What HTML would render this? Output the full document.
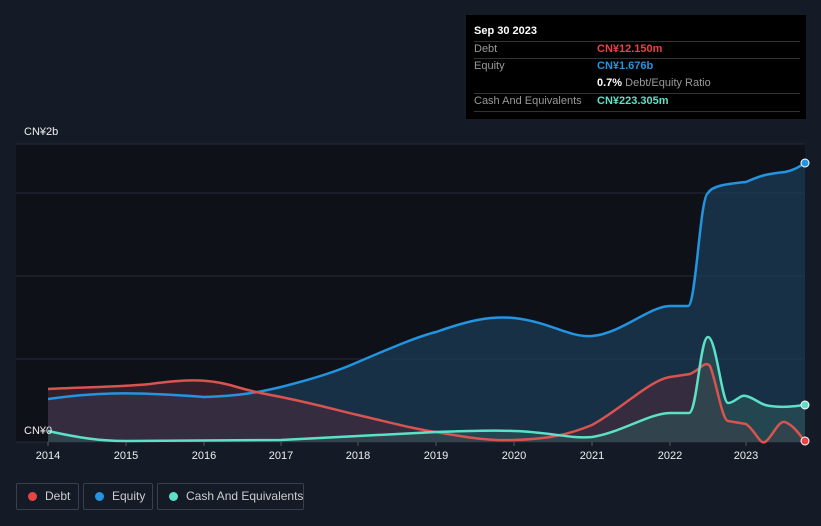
<!DOCTYPE html><html><head><style>
body{margin:0;width:821px;height:526px;background:#151b26;font-family:"Liberation Sans",sans-serif;overflow:hidden;position:relative}
.tt{position:absolute;left:466px;top:15px;width:340px;height:104px;background:#000;color:#fff;font-size:11px}
.tt .r{position:absolute;left:8px;width:326px;border-top:1px solid #333}
.lg{position:absolute;top:483px;height:27px;border:1px solid #3a3f4a;border-radius:2px;color:#ccc;font-size:12px;line-height:25px;box-sizing:border-box;white-space:nowrap}
.lg i{position:absolute;left:11px;top:8px;width:9px;height:9px;border-radius:50%}
.yr{position:absolute;top:450px;color:#eee;font-size:11px;transform:translateX(-50%)}
</style></head><body>
<svg width="821" height="526" style="position:absolute;left:0;top:0">
<rect x="16" y="144" width="789" height="298" fill="#0e1118"/>
<g stroke="#262c37" stroke-width="1"><line x1="16" y1="144" x2="805" y2="144"/><line x1="16" y1="193" x2="805" y2="193"/><line x1="16" y1="276" x2="805" y2="276"/><line x1="16" y1="359" x2="805" y2="359"/><line x1="16" y1="442" x2="805" y2="442"/></g>
<path d="M48,399 C90,393 126,391 204,397 C240,396 260,392 281,387 C320,377 340,370 358,362 C400,344 420,336 436,332 C470,320 490,316 514,318 C550,322 570,338 592,336 C620,334 650,306 670,306 L688,306 C696,306 700,196 708,193 C712,186 725,184 746,182 C760,176 765,174 785,172 C795,170 800,166 805,163 L805,442 L48,442Z" fill="#1b3d5a" opacity=".7"/>
<path d="M48,389 C90,387 120,387 150,384 C180,380 204,378 230,385 C250,391 260,393 281,397 C320,405 340,411 358,415 C400,425 420,430 436,432 C470,438 490,441 514,440 C550,439 570,434 592,425 C620,410 650,380 670,377 L690,374 C700,370 705,360 710,366 C716,380 722,420 728,421 L746,424 C755,430 760,445 765,442 C772,438 778,420 785,422 C795,426 800,436 805,441 L805,442 L48,442Z" fill="#4a2a3a" opacity=".6"/>
<path d="M48,431 C80,438 100,441 126,441 L281,440 C320,438 340,437 358,436 L436,432 C470,431 490,430 514,431 C550,432 570,439 592,437 C620,433 650,413 670,413 L689,413 C697,413 700,337 708,337 C716,337 722,403 728,403 C735,403 740,394 746,396 C755,398 760,405 770,406 C785,408 795,406 805,405 L805,442 L48,442Z" fill="#2e5a5a" opacity=".55"/>
<g fill="none" stroke-width="2.5" stroke-linejoin="round">
<path d="M48,399 C90,393 126,391 204,397 C240,396 260,392 281,387 C320,377 340,370 358,362 C400,344 420,336 436,332 C470,320 490,316 514,318 C550,322 570,338 592,336 C620,334 650,306 670,306 L688,306 C696,306 700,196 708,193 C712,186 725,184 746,182 C760,176 765,174 785,172 C795,170 800,166 805,163" stroke="#2394e0"/>
<path d="M48,389 C90,387 120,387 150,384 C180,380 204,378 230,385 C250,391 260,393 281,397 C320,405 340,411 358,415 C400,425 420,430 436,432 C470,438 490,441 514,440 C550,439 570,434 592,425 C620,410 650,380 670,377 L690,374 C700,370 705,360 710,366 C716,380 722,420 728,421 L746,424 C755,430 760,445 765,442 C772,438 778,420 785,422 C795,426 800,436 805,441" stroke="#d9534f"/>
<path d="M48,431 C80,438 100,441 126,441 L281,440 C320,438 340,437 358,436 L436,432 C470,431 490,430 514,431 C550,432 570,439 592,437 C620,433 650,413 670,413 L689,413 C697,413 700,337 708,337 C716,337 722,403 728,403 C735,403 740,394 746,396 C755,398 760,405 770,406 C785,408 795,406 805,405" stroke="#5ee0c8"/>
</g>
<circle cx="805" cy="163" r="4" fill="#2394e0" stroke="#fff"/><circle cx="805" cy="405" r="4" fill="#5ee0c8" stroke="#fff"/><circle cx="805" cy="441" r="4" fill="#e84444" stroke="#fff"/>
<g stroke="#555"><line x1="48" y1="442" x2="48" y2="446"/><line x1="126" y1="442" x2="126" y2="446"/><line x1="204" y1="442" x2="204" y2="446"/><line x1="281" y1="442" x2="281" y2="446"/><line x1="358" y1="442" x2="358" y2="446"/><line x1="436" y1="442" x2="436" y2="446"/><line x1="514" y1="442" x2="514" y2="446"/><line x1="592" y1="442" x2="592" y2="446"/><line x1="670" y1="442" x2="670" y2="446"/><line x1="746" y1="442" x2="746" y2="446"/></g>
</svg>
<div style="position:absolute;left:24px;top:126px;color:#eee;font-size:11px">CN¥2b</div>
<div style="position:absolute;left:24px;top:425px;color:#eee;font-size:11px">CN¥0</div>
<div class="yr" style="left:48px">2014</div><div class="yr" style="left:126px">2015</div><div class="yr" style="left:204px">2016</div><div class="yr" style="left:281px">2017</div><div class="yr" style="left:358px">2018</div><div class="yr" style="left:436px">2019</div><div class="yr" style="left:514px">2020</div><div class="yr" style="left:592px">2021</div><div class="yr" style="left:670px">2022</div><div class="yr" style="left:746px">2023</div>
<div class="tt">
<div style="position:absolute;left:8px;top:10px;font-weight:bold">Sep 30 2023</div>
<div class="r" style="top:26px"></div>
<div style="position:absolute;left:8px;top:28px;color:#999">Debt</div><div style="position:absolute;left:131px;top:28px;color:#e84444;font-weight:bold">CN¥12.150m</div>
<div class="r" style="top:43px"></div>
<div style="position:absolute;left:8px;top:45px;color:#999">Equity</div><div style="position:absolute;left:131px;top:45px;color:#2394e0;font-weight:bold">CN¥1.676b</div>
<div style="position:absolute;left:131px;top:62px"><b>0.7%</b> <span style="color:#999">Debt/Equity Ratio</span></div>
<div class="r" style="top:78px"></div>
<div style="position:absolute;left:8px;top:80px;color:#999">Cash And Equivalents</div><div style="position:absolute;left:131px;top:80px;color:#5ee0c8;font-weight:bold">CN¥223.305m</div>
<div class="r" style="top:96px"></div>
</div>
<div class="lg" style="left:16px;width:63px"><i style="background:#e84444"></i><span style="position:absolute;left:28px">Debt</span></div>
<div class="lg" style="left:83px;width:70px"><i style="background:#2394e0"></i><span style="position:absolute;left:28px">Equity</span></div>
<div class="lg" style="left:157px;width:147px"><i style="background:#5ee0c8"></i><span style="position:absolute;left:28px">Cash And Equivalents</span></div>
</body></html>
